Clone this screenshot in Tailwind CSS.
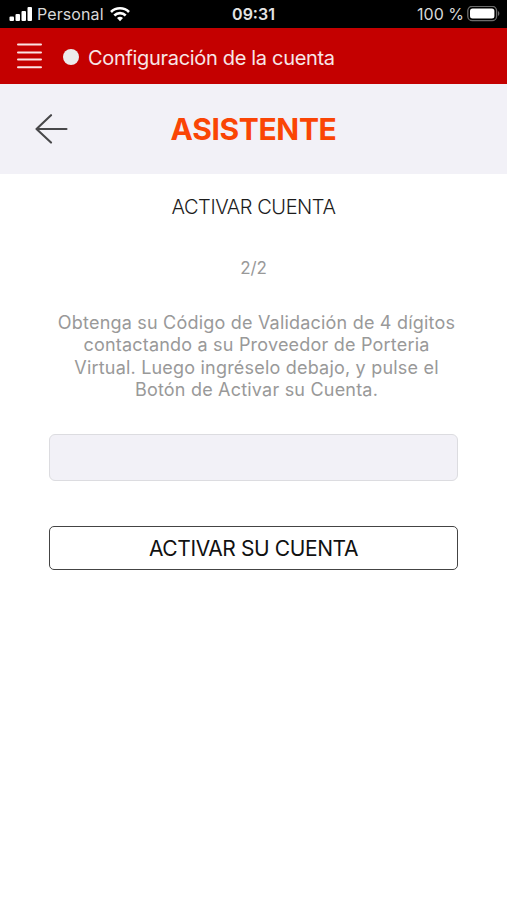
<!DOCTYPE html>
<html lang="es">
<head>
    <meta charset="UTF-8">
    <meta name="viewport" content="width=device-width, initial-scale=1.0">
    <title>Configuración de la cuenta</title>
    <script src="https://cdn.jsdelivr.net/npm/@tailwindcss/browser@4"></script>
</head>
<body class="bg-white font-['Inter',sans-serif]">
    <div class="min-h-screen flex flex-col">
        <!-- Status bar -->
        <div class="h-7 grid grid-cols-3 items-center bg-black text-[#d8d8d8] text-base leading-7 whitespace-nowrap">
            <div class="flex items-center pl-[9px]">
                <svg class="w-[23px] h-[15px]" viewBox="0 0 23 15" fill="#fff">
                    <rect x="0.5" y="9.5" width="4.5" height="4.5" rx="1"/>
                    <rect x="6.5" y="7" width="4.5" height="7" rx="1"/>
                    <rect x="12.5" y="4" width="4.5" height="10" rx="1"/>
                    <rect x="18.5" y="0" width="4.5" height="14" rx="1"/>
                </svg>
                <span class="ml-[5px] tracking-[0.1px]">Personal</span>
                <svg class="ml-1.5 w-5 h-[15px]" viewBox="0 0 20 15" fill="none" stroke="#fff" stroke-width="2.6">
                    <path d="M1 5a12.8 12.8 0 0 1 18 0"/>
                    <path d="M4.3 8.5a8.1 8.1 0 0 1 11.4 0"/>
                    <path d="M10 14.2l-3-3.1a4.3 4.3 0 0 1 6 0z" fill="#fff" stroke="none"/>
                </svg>
            </div>
            <div class="text-center font-semibold text-[#e4e4e4]">09:31</div>
            <div class="flex items-center justify-end pr-[7px]">
                <span>100 %</span>
                <svg class="ml-[3px] w-[33px] h-4" viewBox="0 0 33 16">
                    <rect x="0.8" y="0.3" width="28.8" height="14.4" rx="4.5" fill="none" stroke="#6c6c6c" stroke-width="1.3"/>
                    <rect x="3" y="2.5" width="24.4" height="10" rx="2.5" fill="#fff"/>
                    <path d="M31 5c1.8.8 1.8 4.2 0 5z" fill="#6c6c6c"/>
                </svg>
            </div>
        </div>

        <!-- Navigation bar -->
        <header class="h-14 flex items-center bg-[#c40000] pl-[17px] text-[#f7e6e6]">
            <button type="button" aria-label="Menú">
                <svg class="w-[25px] h-[26px]" viewBox="0 0 25 26" stroke="#fbe3e3" stroke-width="2" stroke-linecap="round">
                    <path d="M1 1.5h23M1 9.5h23M1 16.5h23M1 24.2h23"/>
                </svg>
            </button>
            <span class="ml-[21px] mt-px size-4 rounded-full bg-[#ececec]"></span>
            <h1 class="ml-[9px] pt-[3px] text-xl tracking-[-0.32px]">Configuración de la cuenta</h1>
        </header>

        <!-- Wizard heading -->
        <div class="h-[90px] grid grid-cols-[1fr_auto_1fr] items-center bg-[#f2f1f7]">
            <button type="button" class="ml-[35px] justify-self-start" aria-label="Volver">
                <svg class="w-[33px] h-[30px]" viewBox="0 0 33 30" fill="none" stroke="#48484a" stroke-width="2.1" stroke-linecap="round" stroke-linejoin="round">
                    <path d="M31.5 15H1.5M16 1.2L1.5 15L16 28.6"/>
                </svg>
            </button>
            <h2 class="pt-px text-[30px] font-bold tracking-[-0.35px] text-[#fa4505]">ASISTENTE</h2>
        </div>

        <main class="px-[49px] flex flex-col text-center">
            <h3 class="mt-[19px] text-xl leading-7 font-light tracking-[-0.45px] text-[#1c1c1c]">ACTIVAR CUENTA</h3>
            <p class="mt-[36px] text-[17px] leading-[23px] tracking-[-0.2px] text-[#999]">2/2</p>
            <p class="mt-8 pl-1.5 text-lg leading-[22.4px] tracking-[0.2px] text-[#999] whitespace-nowrap">
                Obtenga su Código de Validación de 4 dígitos<br>
                contactando a su Proveedor de Porteria<br>
                Virtual. Luego ingréselo debajo, y pulse el<br>
                Botón de Activar su Cuenta.
            </p>
            <input type="text" aria-label="Código de validación" class="mt-8 h-[47px] w-full rounded-md border border-[#dcdce0] bg-[#f2f1f7]">
            <button type="button" class="mt-[45px] h-[44px] w-full rounded-[5px] border border-[#444] bg-white pt-0.5 text-[21px] tracking-[-0.4px] text-[#111]">ACTIVAR SU CUENTA</button>
        </main>
    </div>
</body>
</html>
